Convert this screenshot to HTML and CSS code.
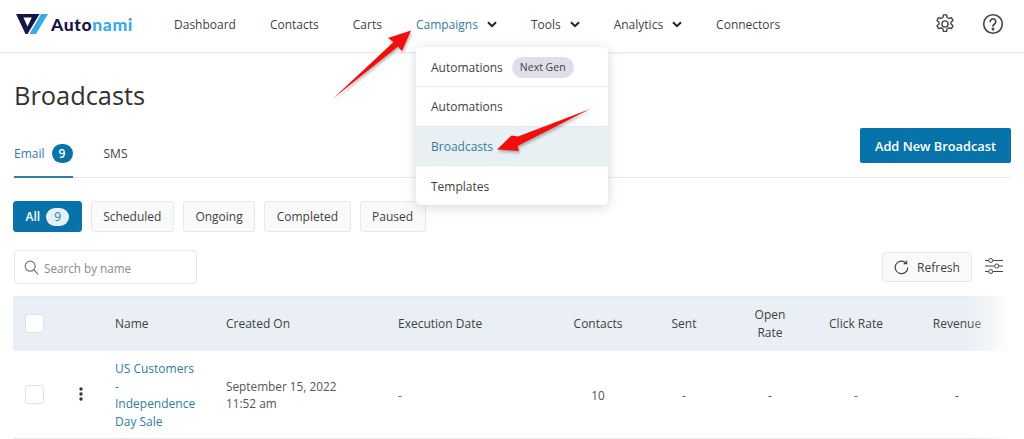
FILE: index.html
```html
<!DOCTYPE html>
<html lang="en">
<head>
<meta charset="utf-8">
<title>Broadcasts</title>
<link rel="stylesheet" href="styles.css">
</head>
<body>
<header class="topbar">
  <a class="logo">
    <svg class="logo-mark" width="32" height="20" viewBox="0 0 32 20"><path fill-rule="evenodd" d="M0 0H23.500L11.500 20H9.500ZM7.500 3.500 11.500 12.500 15.800 3.500Z" fill="#15154a"/><path d="M25 0H32L20 20H13.500Z" fill="#3ba9e6"/></svg>
    <span class="logo-text">Auto<span class="logo-accent">nami</span></span>
  </a>
  <nav class="nav">
    <a class="nav-item">Dashboard</a>
    <a class="nav-item">Contacts</a>
    <a class="nav-item">Carts</a>
    <a class="nav-item nav-active">Campaigns<svg class="chev" width="10" height="7" viewBox="0 0 10 7"><path d="M1 1.200 5 5.200 9 1.200" fill="none" stroke="#222" stroke-width="2"/></svg></a>
    <a class="nav-item">Tools<svg class="chev" width="10" height="7" viewBox="0 0 10 7"><path d="M1 1.200 5 5.200 9 1.200" fill="none" stroke="#222" stroke-width="2"/></svg></a>
    <a class="nav-item">Analytics<svg class="chev" width="10" height="7" viewBox="0 0 10 7"><path d="M1 1.200 5 5.200 9 1.200" fill="none" stroke="#222" stroke-width="2"/></svg></a>
    <a class="nav-item">Connectors</a>
  </nav>
  <div class="top-icons">
    <svg width="22" height="22" viewBox="0 0 24 24" fill="none" stroke="#444" stroke-width="1.500" stroke-linejoin="round"><circle cx="12" cy="12" r="3.400"/><path d="M10.300 2h3.400l.6 2.900 1.900 1.100 2.800-.9 1.700 3-2.200 2c.1.600.1 1.300 0 1.900l2.200 2-1.700 3-2.800-.9-1.900 1.100-.6 2.800h-3.400l-.6-2.800-1.900-1.100-2.800.9-1.700-3 2.200-2a6 6 0 0 1 0-1.900l-2.200-2 1.700-3 2.800.9 1.900-1.100z"/></svg>
    <svg width="22" height="22" viewBox="0 0 22 22" fill="none" stroke="#444" stroke-width="1.600"><circle cx="11" cy="11" r="9.300"/><path d="M8.200 8.600a2.800 2.800 0 1 1 4.300 2.400c-1 .6-1.500 1.100-1.500 2.300" stroke-linecap="round"/><circle cx="11" cy="16" r=".7" fill="#444"/></svg>
  </div>
</header>

<main class="page">
  <h1 class="title">Broadcasts</h1>

  <div class="tabs-row">
    <div class="tabs">
      <a class="tab tab-active">Email <span class="tab-badge">9</span></a>
      <a class="tab">SMS</a>
    </div>
    <button class="btn-primary">Add New Broadcast</button>
  </div>

  <div class="filters">
    <a class="pill pill-active">All <span class="pill-count">9</span></a>
    <a class="pill">Scheduled</a>
    <a class="pill">Ongoing</a>
    <a class="pill">Completed</a>
    <a class="pill">Paused</a>
  </div>

  <div class="toolbar">
    <div class="search">
      <svg width="15" height="15" viewBox="0 0 15 15" fill="none" stroke="#777" stroke-width="1.200"><circle cx="6.200" cy="6.200" r="5"/><path d="M10 10l4.300 4.300"/></svg>
      <span>Search by name</span>
    </div>
    <div class="tools">
      <button class="btn-refresh">
        <svg width="15" height="15" viewBox="0 0 15 15" fill="none" stroke="#444" stroke-width="1.200"><path d="M12.200 3.200A6.300 6.300 0 1 0 13.800 7.500"/><path d="M12.700 .6v3h-3" stroke-width="1.100"/></svg>
        Refresh
      </button>
      <svg class="sliders" width="18" height="16" viewBox="0 0 18 16" fill="none" stroke="#444" stroke-width="1"><path d="M0 2.500h3.500M8 2.500h10M0 8h9.500M14 8h4M0 13.500h3.500M8 13.500h10"/><circle cx="5.700" cy="2.500" r="2"/><circle cx="11.700" cy="8" r="2"/><circle cx="5.700" cy="13.500" r="2"/></svg>
    </div>
  </div>

  <div class="table-wrap">
    <table class="table">
      <colgroup>
        <col class="c-check"><col class="c-act"><col class="c-name"><col class="c-date"><col class="c-exec"><col class="c-num"><col class="c-num"><col class="c-num"><col class="c-num"><col class="c-rev">
      </colgroup>
      <thead>
        <tr>
          <th class="cell-check"><span class="checkbox"></span></th>
          <th></th>
          <th>Name</th>
          <th>Created On</th>
          <th>Execution Date</th>
          <th class="center">Contacts</th>
          <th class="center">Sent</th>
          <th class="center">Open<br>Rate</th>
          <th class="center">Click Rate</th>
          <th class="center">Revenue</th>
        </tr>
      </thead>
      <tbody>
        <tr>
          <td class="cell-check"><span class="checkbox"></span></td>
          <td class="cell-act"><svg width="4" height="14" viewBox="0 0 4 14" fill="#333"><circle cx="2" cy="2" r="1.700"/><circle cx="2" cy="7" r="1.700"/><circle cx="2" cy="12" r="1.700"/></svg></td>
          <td><a class="row-link">US Customers<br>-<br>Independence<br>Day Sale</a></td>
          <td>September 15, 2022<br>11:52 am</td>
          <td>-</td>
          <td class="center">10</td>
          <td class="center">-</td>
          <td class="center">-</td>
          <td class="center">-</td>
          <td class="center">-</td>
        </tr>
      </tbody>
    </table>
    <div class="fade"></div>
  </div>
</main>

<div class="dropdown">
  <a class="dd-item">Automations <span class="dd-tag">Next Gen</span></a>
  <a class="dd-item">Automations</a>
  <a class="dd-item dd-active">Broadcasts</a>
  <a class="dd-item">Templates</a>
</div>

<svg class="arrows" width="1024" height="439" viewBox="0 0 1024 439">
  <polygon points="333,98.500 393.500,42 388,38 411,30.500 402,51 398,46.500" fill="#f40d0d"/>
  <polygon points="590,109 518,136.500 511.500,135.500 497,149.500 519,151 517.500,146" fill="#f40d0d"/>
</svg>
</body>
</html>
```
FILE: styles.css
```css
* { box-sizing: border-box; }
html, body { margin: 0; padding: 0; height: 439px; overflow: hidden; }
body { font-family: "Open Sans", "Noto Sans", sans-serif; font-size: 12px; color: #3f3f3f; background: #fff; position: relative; }

.topbar { height: 53px; display: flex; align-items: center; padding: 0 20px 4px 16px; border-bottom: 1px solid #eee; box-shadow: 0 1px 3px rgba(0,0,0,.05); }
.logo { display: flex; align-items: center; gap: 3px; width: 158px; flex: none; }
.logo-mark { display: block; flex: none; }
.logo-text { font-family: Lato, sans-serif; font-weight: 900; font-size: 17.500px; letter-spacing: .65px; color: #15154a; }
.logo-accent { color: #3ba9e6; }
.nav { display: flex; gap: 34px; flex: 1; }
.nav-item { display: flex; align-items: center; font-weight: 500; color: #3f3f3f; white-space: nowrap; }
.nav-active { color: #2f7ea1; }
.chev { margin-left: 9px; }
.top-icons { display: flex; gap: 26px; align-items: center; }

.page { padding: 0 14px; }
.title { margin: 24px 0 0; font-size: 25.400px; line-height: 36px; font-weight: 500; color: #353030; }
.tabs-row { display: flex; justify-content: space-between; align-items: flex-start; margin-top: 15px; border-bottom: 1px solid #e5e7eb; height: 50px; }
.tabs { display: flex; gap: 31px; height: 50px; }
.tab { display: flex; align-items: center; gap: 7px; height: 50px; font-weight: 500; color: #3f3f3f; }
.tab-active { color: #2f7ea1; border-bottom: 2px solid #2f7ea1; padding-top: 2px; }
.tab-badge { width: 21px; height: 19px; border-radius: 10px; background: #0873a8; color: #fff; display: flex; align-items: center; justify-content: center; font-size: 12px; font-weight: 600; }
.btn-primary { width: 151px; height: 35px; margin-right: -1px; border: 0; border-radius: 2px; background: #0873a8; color: #fff; font: 600 12.800px "Open Sans", sans-serif; padding: 0; }

.filters { display: flex; gap: 9px; margin: 23px 0 0 -1px; }
.pill { height: 31px; display: flex; align-items: center; padding: 0 11.500px; border: 1px solid #e8e8e8; border-radius: 3px; background: #fafafa; font-weight: 500; color: #3f3f3f; }
.pill-active { background: #0873a8; border-color: #0873a8; color: #fff; font-weight: 600; gap: 6px; }
.pill-count { width: 23px; height: 18px; border-radius: 9px; background: #e6f1f7; color: #2f7ea1; display: flex; align-items: center; justify-content: center; font-size: 12px; font-weight: 500; }

.toolbar { display: flex; justify-content: space-between; align-items: center; margin-top: 18px; }
.search { width: 183px; height: 34px; border: 1px solid #e5e7eb; border-radius: 4px; display: flex; align-items: center; gap: 5px; padding: 1px 0 0 9px; color: #8a8a8a; font-size: 11.700px; }
.tools { display: flex; align-items: center; gap: 13px; margin-right: 7px; }
.btn-refresh { width: 90px; height: 30px; border: 1px solid #e8e8e8; border-radius: 3px; background: #fafafa; display: flex; align-items: center; justify-content: center; gap: 8px; font: 500 12px "Open Sans", sans-serif; color: #3f3f3f; padding: 0; }
.sliders { display: block; margin-bottom: 2px; }

.table-wrap { position: relative; margin: 12px 0 0 -1px; overflow: hidden; width: 997px; }
.table { border-collapse: collapse; table-layout: fixed; width: 1002px; }
.c-check { width: 54px; } .c-act { width: 36px; } .c-name { width: 111px; } .c-date { width: 172px; } .c-exec { width: 169px; } .c-num { width: 86px; } .c-rev { width: 116px; }
.table th { height: 54px; background: #e9eff4; font-weight: 500; color: #3f3f3f; text-align: left; padding: 0 12px; line-height: 17.400px; border-top: 1px solid #e3e9ee; }
.table td { height: 88px; padding: 2px 12px 0; line-height: 17.400px; border-bottom: 1px solid #e5e7eb; color: #555; font-size: 11.800px; }
.table .center { text-align: center; }
.table .cell-check { padding: 0 0 0 12px; }
.table .cell-act { padding: 0 0 0 12px; }
.cell-act svg { display: block; }
.checkbox { display: block; width: 19px; height: 19px; border: 1px solid #dfe3e7; border-radius: 3px; background: #fff; }
.row-link { color: #2f7ea1; font-weight: 500; font-size: 12px; display: block; }
.fade { position: absolute; top: 0; right: 0; bottom: 0; width: 45px; background: linear-gradient(to right, rgba(255,255,255,0), rgba(255,255,255,.45) 55%, #fff); }

.dropdown { position: absolute; left: 416px; top: 47px; width: 192px; height: 158px; background: #fff; border-radius: 5px; box-shadow: 0 2px 12px rgba(40,50,90,.2); overflow: hidden; display: flex; flex-direction: column; }
.dd-item { flex: 1; display: flex; align-items: center; gap: 9px; padding: 1.500px 15px 0; font-weight: 500; color: #3f3f3f; border-bottom: 1px solid #e6e8ec; }
.dd-item:last-child { border-bottom: 0; }
.dd-active { background: #e9f0f4; color: #2f7ea1; }
.dd-tag { height: 21px; padding: 0 8px; border-radius: 11px; background: #dfdfea; display: flex; align-items: center; font-size: 10.500px; color: #3f3f3f; }

.arrows { position: absolute; left: 0; top: 0; pointer-events: none; filter: drop-shadow(1px 2px 1.500px rgba(0,0,0,.3)); }
```
